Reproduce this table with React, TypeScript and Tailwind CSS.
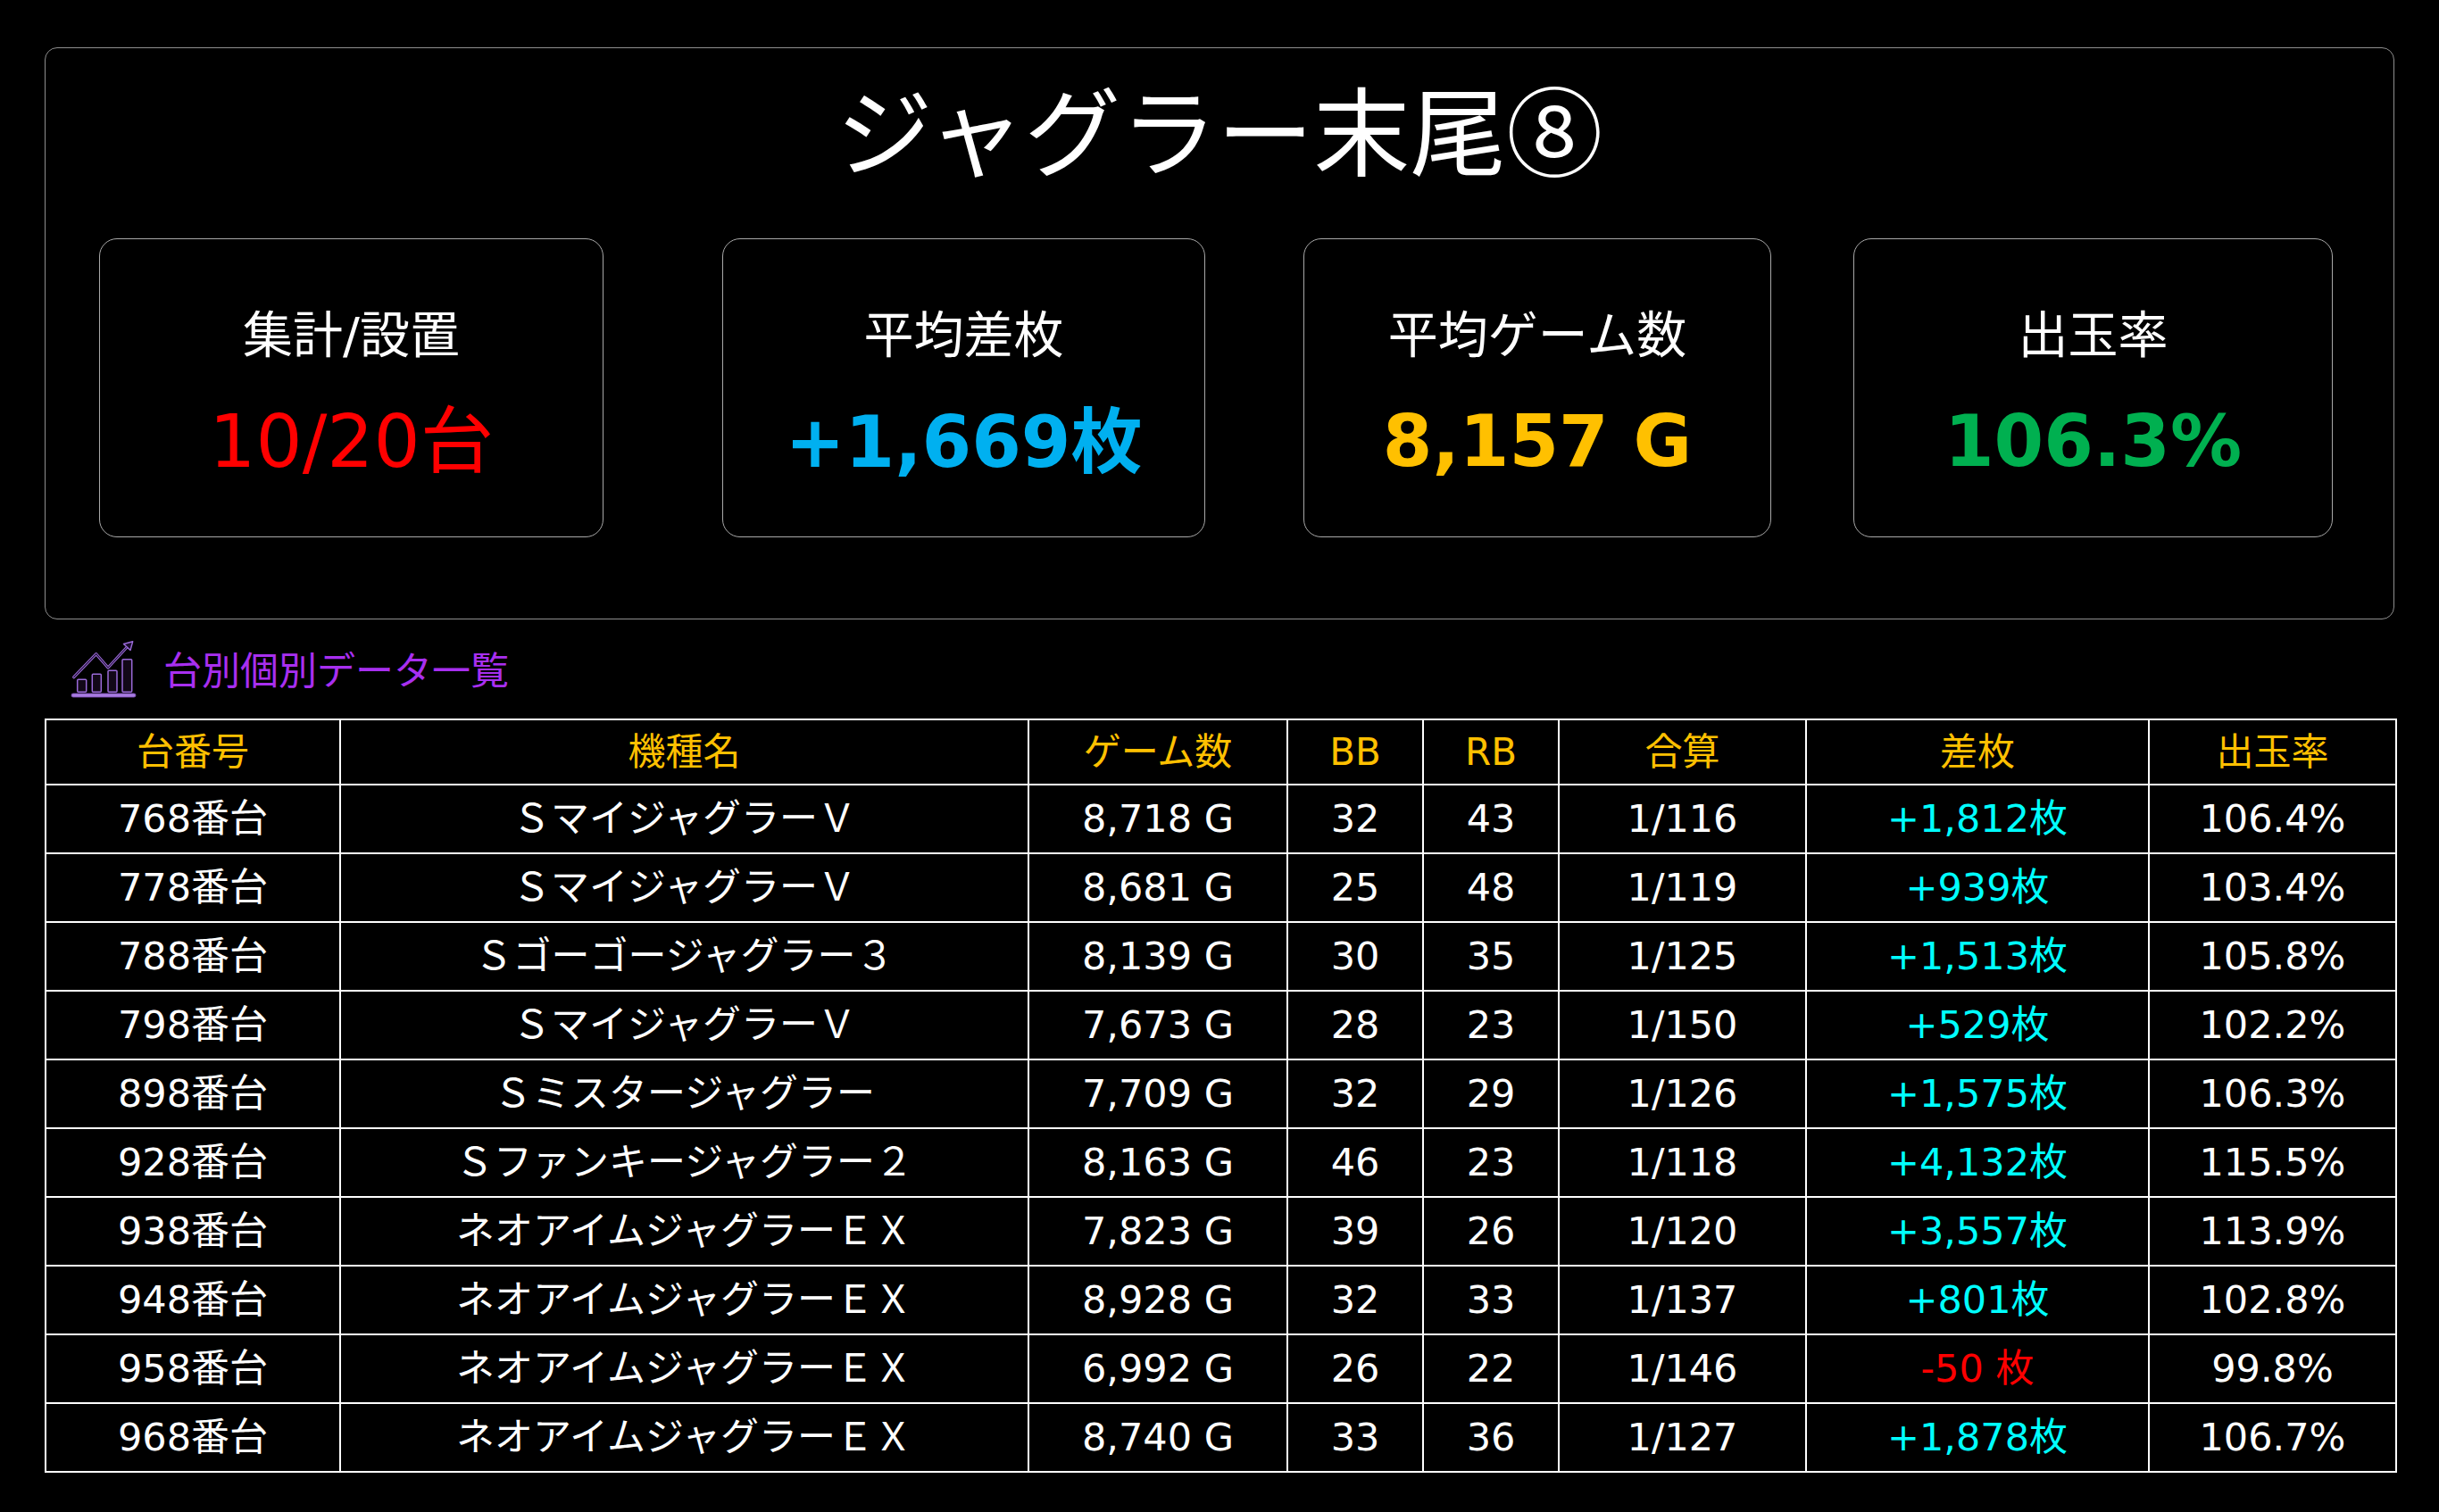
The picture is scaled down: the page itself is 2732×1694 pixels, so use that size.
import React from "react";

type Row = {
  no: string;
  name: string;
  games: string;
  bb: string;
  rb: string;
  total: string;
  diff: string;
  rate: string;
};

const rows: Row[] = [
  { no: "768番台", name: "ＳマイジャグラーＶ", games: "8,718 G", bb: "32", rb: "43", total: "1/116", diff: "+1,812枚", rate: "106.4%" },
  { no: "778番台", name: "ＳマイジャグラーＶ", games: "8,681 G", bb: "25", rb: "48", total: "1/119", diff: "+939枚", rate: "103.4%" },
  { no: "788番台", name: "Ｓゴーゴージャグラー３", games: "8,139 G", bb: "30", rb: "35", total: "1/125", diff: "+1,513枚", rate: "105.8%" },
  { no: "798番台", name: "ＳマイジャグラーＶ", games: "7,673 G", bb: "28", rb: "23", total: "1/150", diff: "+529枚", rate: "102.2%" },
  { no: "898番台", name: "Ｓミスタージャグラー", games: "7,709 G", bb: "32", rb: "29", total: "1/126", diff: "+1,575枚", rate: "106.3%" },
  { no: "928番台", name: "Ｓファンキージャグラー２", games: "8,163 G", bb: "46", rb: "23", total: "1/118", diff: "+4,132枚", rate: "115.5%" },
  { no: "938番台", name: "ネオアイムジャグラーＥＸ", games: "7,823 G", bb: "39", rb: "26", total: "1/120", diff: "+3,557枚", rate: "113.9%" },
  { no: "948番台", name: "ネオアイムジャグラーＥＸ", games: "8,928 G", bb: "32", rb: "33", total: "1/137", diff: "+801枚", rate: "102.8%" },
  { no: "958番台", name: "ネオアイムジャグラーＥＸ", games: "6,992 G", bb: "26", rb: "22", total: "1/146", diff: "-50 枚", rate: "99.8%" },
  { no: "968番台", name: "ネオアイムジャグラーＥＸ", games: "8,740 G", bb: "33", rb: "36", total: "1/127", diff: "+1,878枚", rate: "106.7%" },
];

function ChartIcon() {
  return (
    <svg width="90" height="80" viewBox="0 0 90 80" fill="none">
      <g>
        <polyline points="6.7,46.7 31.7,20.7 45,36 69,10" stroke="#9a6ad8" strokeWidth="3.2" strokeLinejoin="round" strokeLinecap="round" />
        <polyline points="6.7,46.7 31.7,20.7 45,36 69,10" stroke="#1b0d2b" strokeWidth="1.1" strokeLinejoin="round" strokeLinecap="round" />
        <polygon points="72.7,6.7 62.5,9.5 70,16.5" fill="#1b0d2b" stroke="#9a6ad8" strokeWidth="1.4" strokeLinejoin="round" />
        <rect x="10.7" y="49.3" width="10" height="14" rx="1" fill="#120818" stroke="#9a6ad8" strokeWidth="1.5" />
        <rect x="27.3" y="43.3" width="10" height="20" rx="1" fill="#120818" stroke="#9a6ad8" strokeWidth="1.5" />
        <rect x="45" y="39.3" width="10" height="24" rx="1" fill="#120818" stroke="#9a6ad8" strokeWidth="1.5" />
        <rect x="61" y="26.7" width="10.7" height="36.6" rx="1" fill="#120818" stroke="#9a6ad8" strokeWidth="1.5" />
        <rect x="4" y="65" width="72" height="4" rx="2" fill="#a77be0" stroke="#7d4fb8" strokeWidth="0.8" />
      </g>
    </svg>
  );
}

function Card({ label, value, valueClass, widthClass, mlClass }: { label: string; value: string; valueClass: string; widthClass: string; mlClass: string }) {
  return (
    <div className={`${widthClass} ${mlClass} h-[335px] shrink-0 rounded-[20px] border-[1.5px] border-[#a8a8a8] flex flex-col items-center pt-[80px]`}>
      <div className="text-[56px] leading-none text-white">{label}</div>
      <div className={`leading-none ${valueClass}`}>{value}</div>
    </div>
  );
}

export default function App() {
  const th = "border-2 border-white p-0 text-center font-normal text-[42px] text-[#ffc000]";
  const td = "border-2 border-white p-0 text-center text-[43px]";
  return (
    <div className="w-[2732px] min-h-[1694px] bg-black px-[50px] pt-[53px] font-['DejaVu_Sans','Noto_Sans_CJK_JP',sans-serif]">
      <div className="h-[641px] rounded-[14px] border-[1.5px] border-[#8f8f8f] pt-[34px]">
        <div className="h-[108px] text-center text-[108px] leading-none text-white">
          ジャグラー末尾<span className="font-['Noto_Sans_CJK_JP',sans-serif]">⑧</span>
        </div>
        <div className="mt-[71px] flex pl-[60px]">
          <Card label="集計/設置" value="10/20台" valueClass="mt-[50px] text-[82px] text-[#ff0000] font-normal" widthClass="w-[565px]" mlClass="ml-0" />
          <Card label="平均差枚" value="+1,669枚" valueClass="mt-[52px] text-[80px] text-[#00b0f0] font-bold" widthClass="w-[541px]" mlClass="ml-[133px]" />
          <Card label="平均ゲーム数" value="8,157 G" valueClass="mt-[51px] text-[80px] text-[#ffc000] font-bold" widthClass="w-[524px]" mlClass="ml-[110px]" />
          <Card label="出玉率" value="106.3%" valueClass="mt-[51px] text-[80px] text-[#00b050] font-bold" widthClass="w-[537px]" mlClass="ml-[92px]" />
        </div>
      </div>

      <div className="mt-[18px] flex h-[80px] items-center pl-[26px]">
        <ChartIcon />
        <div className="ml-[17px] text-[43px] leading-none text-[#a82ff0]">台別個別データ一覧</div>
      </div>

      <table className="mt-[13px] w-[2633px] table-fixed border-collapse">
        <colgroup>
          <col className="w-[330px]" />
          <col className="w-[771px]" />
          <col className="w-[290px]" />
          <col className="w-[152px]" />
          <col className="w-[152px]" />
          <col className="w-[277px]" />
          <col className="w-[384px]" />
          <col className="w-[277px]" />
        </colgroup>
        <thead>
          <tr className="h-[73px]">
            <th className={th}>台番号</th>
            <th className={th}>機種名</th>
            <th className={th}>ゲーム数</th>
            <th className={th}>BB</th>
            <th className={th}>RB</th>
            <th className={th}>合算</th>
            <th className={th}>差枚</th>
            <th className={th}>出玉率</th>
          </tr>
        </thead>
        <tbody>
          {rows.map((r) => (
            <tr key={r.no} className="h-[77px]">
              <td className={`${td} text-white`}>{r.no}</td>
              <td className={`${td} text-white`}>{r.name}</td>
              <td className={`${td} text-white`}>{r.games}</td>
              <td className={`${td} text-white`}>{r.bb}</td>
              <td className={`${td} text-white`}>{r.rb}</td>
              <td className={`${td} text-white`}>{r.total}</td>
              <td className={`${td} ${r.diff.startsWith("-") ? "text-[#ff0000]" : "text-[#00ffff]"}`}>{r.diff}</td>
              <td className={`${td} text-white`}>{r.rate}</td>
            </tr>
          ))}
        </tbody>
      </table>
    </div>
  );
}
